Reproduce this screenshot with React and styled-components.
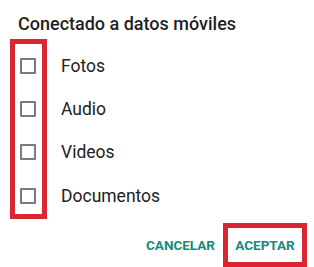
import React from "react";
import styled, { createGlobalStyle } from "styled-components";

const Global = createGlobalStyle`
  html, body { margin: 0; padding: 0; background: #fff; }
  body { font-family: Roboto, "Noto Sans", Arial, sans-serif; width: 314px; height: 267px; overflow: hidden; }
`;

const Dialog = styled.div`
  width: 314px;
  height: 267px;
  display: flex;
  flex-direction: column;
  background: #fff;
`;

const Title = styled.h2`
  margin: 0;
  padding: 12px 0 0 18px;
  font-size: 18px;
  font-weight: 500;
  color: #1f1f1f;
  line-height: 24px;
  letter-spacing: 0;
`;

const List = styled.div`
  display: flex;
  margin-top: 3px;
  margin-left: 10px;
`;

const Highlight = styled.div`
  border: 5px solid #d92632;
  box-sizing: border-box;
`;

const BoxColumn = styled(Highlight)`
  width: 37px;
  height: 180px;
  display: flex;
  flex-direction: column;
`;

const BoxCell = styled.div`
  flex-shrink: 0;
  height: 43.3px;
  display: flex;
  align-items: center;
  padding-left: 5px;
`;

const Box = styled.span`
  width: 12px;
  height: 12px;
  border: 2px solid #7a7a7a;
  border-radius: 1px;
  box-sizing: content-box;
`;

const LabelColumn = styled.div`
  display: flex;
  flex-direction: column;
  padding-top: 5px;
  padding-left: 14px;
`;

const Label = styled.div`
  flex-shrink: 0;
  height: 43.3px;
  display: flex;
  align-items: center;
  font-size: 17.5px;
  color: #222;
`;

const Actions = styled.div`
  display: flex;
  justify-content: flex-end;
  align-items: center;
  margin-top: 4px;
  padding-right: 7px;
  gap: 8px;
`;

const Button = styled.button`
  background: none;
  border: none;
  padding: 0;
  font-family: Roboto, Arial, sans-serif;
  font-size: 13.5px;
  font-weight: 700;
  color: #128c7e;
  letter-spacing: 0;
  cursor: pointer;
`;

const ButtonFrame = styled(Highlight)`
  width: 84px;
  height: 44px;
  display: flex;
  align-items: center;
  justify-content: center;
`;

const items = ["Fotos", "Audio", "Videos", "Documentos"];

export default function App() {
  return (
    <Dialog>
      <Global />
      <Title>Conectado a datos móviles</Title>
      <List>
        <BoxColumn>
          {items.map((t) => (
            <BoxCell key={t}>
              <Box />
            </BoxCell>
          ))}
        </BoxColumn>
        <LabelColumn>
          {items.map((t) => (
            <Label key={t}>{t}</Label>
          ))}
        </LabelColumn>
      </List>
      <Actions>
        <Button>CANCELAR</Button>
        <ButtonFrame>
          <Button>ACEPTAR</Button>
        </ButtonFrame>
      </Actions>
    </Dialog>
  );
}
